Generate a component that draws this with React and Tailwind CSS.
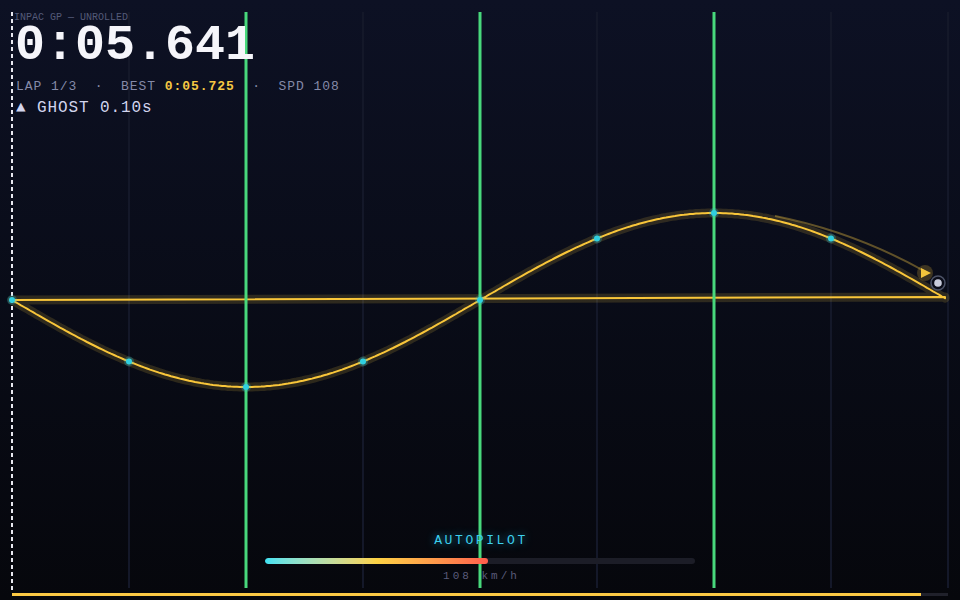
import React from "react";

const W = 960;
const X0 = 12;
const X1 = 945;
const MID = 300;
const AMP = 87;
const HALF = 468;

const trackY = (x) => MID + AMP * Math.sin((Math.PI * (x - X0)) / HALF);

function buildTrack() {
  let d = `M${X0} ${MID}`;
  for (let x = X0 + 3; x <= X1; x += 3) {
    d += ` L${x} ${trackY(x).toFixed(1)}`;
  }
  d += ` L${X1} 297 L${X0} ${MID}`;
  return d;
}

const trackPath = buildTrack();
const grid = [1, 2, 3, 4, 5, 6, 7, 8].map((k) => X0 + 117 * k);
const checkpoints = [246, 480, 714];
const dots = [0, 1, 2, 3, 4, 5, 6, 7].map((k) => X0 + 117 * k);

function TrackCanvas() {
  return (
    <svg
      className="absolute inset-0"
      width={W}
      height="600"
      viewBox="0 0 960 600"
      fill="none"
    >
      {/* faint sector grid */}
      {grid.map((x) => (
        <line key={x} x1={x} y1="12" x2={x} y2="588" stroke="#141829" strokeWidth="2" />
      ))}

      {/* start line */}
      <line
        x1="12"
        y1="12"
        x2="12"
        y2="590"
        stroke="#e8e8f0"
        strokeWidth="2"
        strokeDasharray="4 3"
      />

      {/* ghost trail */}
      <path
        d="M775 216 Q855 232 926 272"
        stroke="#9a7e34"
        strokeOpacity="0.6"
        strokeWidth="2"
      />

      {/* track */}
      <path
        d={trackPath}
        stroke="#f5c542"
        strokeOpacity="0.16"
        strokeWidth="9"
        strokeLinejoin="round"
        strokeLinecap="round"
      />
      <path
        d={trackPath}
        stroke="#f9c63a"
        strokeWidth="2"
        strokeLinejoin="round"
        strokeLinecap="round"
      />

      {/* checkpoints */}
      {checkpoints.map((x) => (
        <line key={x} x1={x} y1="12" x2={x} y2="588" stroke="#48d87c" strokeWidth="3" />
      ))}

      {/* sample dots */}
      {dots.map((x) => (
        <g key={x}>
          <circle cx={x} cy={trackY(x)} r="5" fill="#2ad0e4" fillOpacity="0.25" />
          <circle cx={x} cy={trackY(x)} r="3" fill="#30cfe0" />
        </g>
      ))}

      {/* ghost */}
      <circle cx="925" cy="273" r="8" fill="#f5c542" fillOpacity="0.22" />
      <path d="M921 268 L931 273 L921 278 Z" fill="#f3c53c" />

      {/* car */}
      <circle cx="938" cy="283" r="7" fill="#0a0c18" stroke="#4c5266" strokeWidth="1.5" />
      <circle cx="938" cy="283" r="3.8" fill="#c9ccdc" />
    </svg>
  );
}

function Hud() {
  return (
    <div className="absolute left-[14px] top-[12px] flex flex-col font-['Liberation_Mono',monospace]">
      <div className="text-[10px] leading-[12px] text-[#545a78]">INPAC GP — UNROLLED</div>
      <div className="ml-[1px] text-[50px] leading-[44px] font-bold text-[#f5f5fa]">
        0:05.641
      </div>
      <div className="ml-[2px] mt-[11px] whitespace-pre text-[13px] leading-[16px] tracking-[0.95px] text-[#858aa8]">
        {"LAP 1/3  ·  BEST "}
        <span className="font-bold text-[#f6c843]">0:05.725</span>
        {"  ·  SPD 108"}
      </div>
      <div className="ml-[2px] mt-[3px] whitespace-pre text-[16px] leading-[20px] tracking-[0.9px] text-[#d2d5ee]">
        ▲ GHOST 0.10s
      </div>
    </div>
  );
}

function Autopilot({ speed = 108, pct = 51.8 }) {
  return (
    <div className="absolute left-[265px] top-[533px] flex w-[430px] flex-col items-center font-['Liberation_Mono',monospace]">
      <div className="pl-[2px] text-[13px] leading-[16px] tracking-[2.6px] text-[#3ccfee] [text-shadow:0_0_8px_rgba(40,200,240,0.7)]">
        AUTOPILOT
      </div>
      <div className="mt-[9px] h-[6px] w-full overflow-hidden rounded-full bg-[#1c1d27]">
        <div
          className="h-full rounded-full bg-gradient-to-r from-[#3de2f2] via-[#fcd244] to-[#ff5c4c]"
          style={{ width: `${pct}%` }}
        />
      </div>
      <div className="mt-[5px] pl-[3px] text-[11px] leading-[14px] tracking-[3px] text-[#5a5b7a]">
        {speed} km/h
      </div>
    </div>
  );
}

export default function App() {
  return (
    <div className="relative h-[600px] w-[960px] overflow-hidden bg-gradient-to-b from-[#0d1124] to-[#06070c]">
      <TrackCanvas />
      <Hud />
      <Autopilot />
      {/* lap progress */}
      <div className="absolute left-[12px] top-[593px] h-[3px] w-[936px] bg-[#20212b]">
        <div className="h-full w-[909px] bg-[#fcc944]" />
      </div>
    </div>
  );
}
